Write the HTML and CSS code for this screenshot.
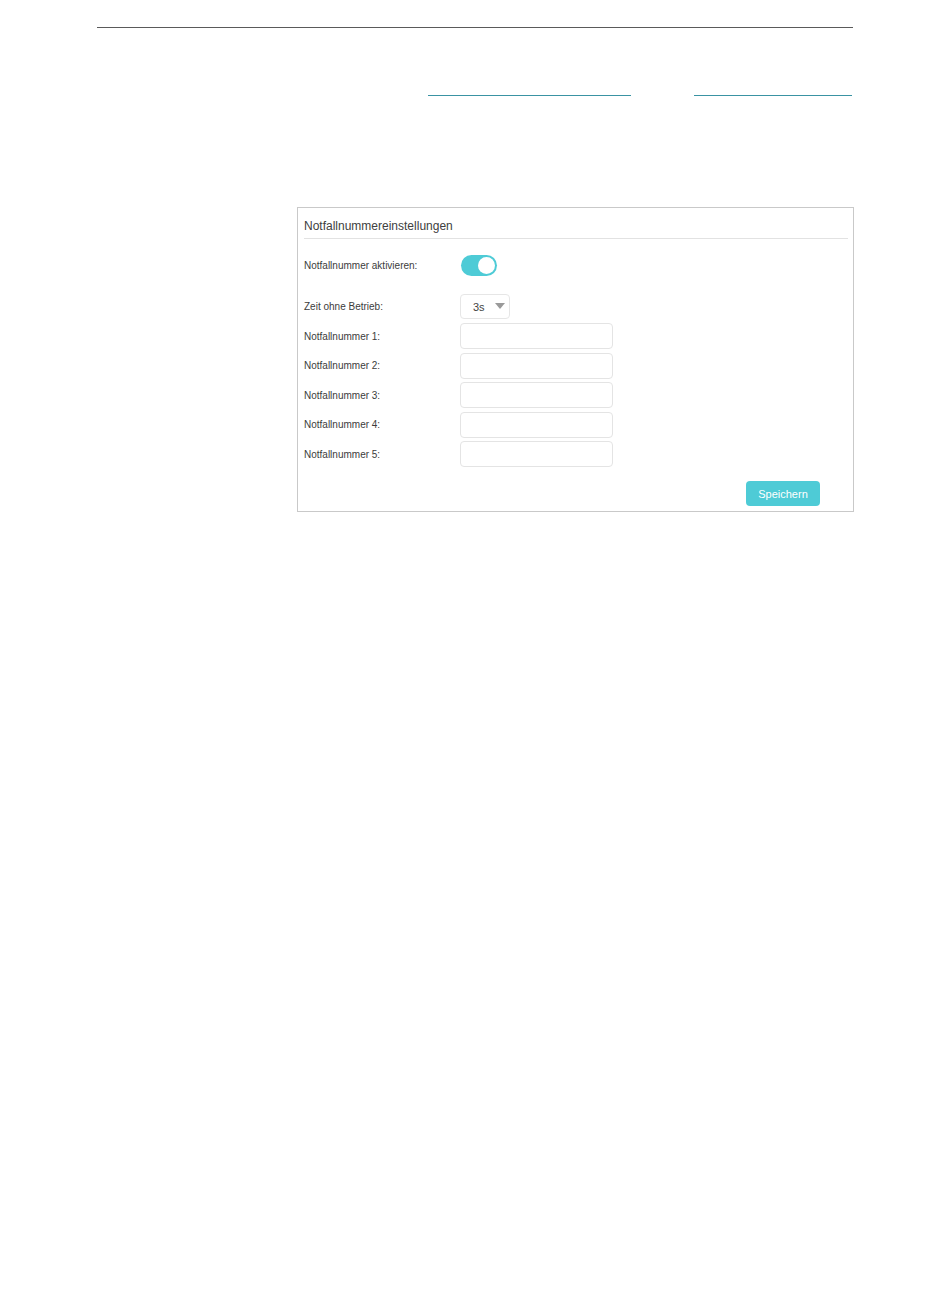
FILE: index.html
```html
<!DOCTYPE html>
<html lang="de">
<head>
    <meta charset="UTF-8">
    <meta name="viewport" content="width=device-width, initial-scale=1.0">
    <title>Notfallnummereinstellungen</title>
    <link rel="stylesheet" href="styles.css">
</head>
<body>
    <div class="page">
        <hr class="top-rule">
        <div class="links">
            <span class="link-line wide"></span>
            <span class="link-line narrow"></span>
        </div>

        <div class="panel">
            <h2 class="panel-title">Notfallnummereinstellungen</h2>
            <div class="form">
                <div class="row toggle-row">
                    <label>Notfallnummer aktivieren:</label>
                    <span class="toggle"><span class="knob"></span></span>
                </div>
                <div class="row select-row">
                    <label>Zeit ohne Betrieb:</label>
                    <div class="select">
                        <span>3s</span>
                        <span class="caret"></span>
                    </div>
                </div>
                <div class="row">
                    <label>Notfallnummer 1:</label>
                    <input type="text">
                </div>
                <div class="row">
                    <label>Notfallnummer 2:</label>
                    <input type="text">
                </div>
                <div class="row">
                    <label>Notfallnummer 3:</label>
                    <input type="text">
                </div>
                <div class="row">
                    <label>Notfallnummer 4:</label>
                    <input type="text">
                </div>
                <div class="row">
                    <label>Notfallnummer 5:</label>
                    <input type="text">
                </div>
            </div>
            <div class="actions">
                <button>Speichern</button>
            </div>
        </div>
    </div>
</body>
</html>
```

FILE: styles.css
```css
body {
    margin: 0;
    background: #ffffff;
    font-family: "Liberation Sans", Arial, sans-serif;
    color: #3c3c3c;
}

.page {
    width: 950px;
    height: 1290px;
}

.top-rule {
    margin: 27px 97px 0 97px;
    border: none;
    border-top: 1px solid #5a5a5a;
    height: 0;
}

.links {
    display: flex;
    margin-top: 67px;
    padding-left: 428px;
    gap: 63px;
}

.link-line {
    display: block;
    height: 1px;
    background: #3a93a3;
}

.link-line.wide {
    width: 203px;
}

.link-line.narrow {
    width: 158px;
}

.panel {
    margin: 111px 0 0 297px;
    width: 555px;
    border: 1px solid #c9c9c9;
    box-sizing: content-box;
}

.panel-title {
    margin: 0 5px 0 6px;
    padding: 11px 0 5px 0;
    font-size: 12px;
    font-weight: normal;
    color: #404040;
    border-bottom: 1px solid #e2e2e2;
}

.form {
    padding: 15px 0 0 6px;
    display: flex;
    flex-direction: column;
    gap: 3.5px;
}

.row {
    display: grid;
    grid-template-columns: 156px auto;
    align-items: center;
    height: 26px;
}

.row label {
    font-size: 10px;
    color: #3c3c3c;
}

.toggle-row {
    height: 22px;
    margin-bottom: 14px;
}

.toggle {
    position: relative;
    display: block;
    width: 36px;
    height: 21px;
    margin-left: 1px;
    border-radius: 11px;
    background: #4ecbd6;
}

.knob {
    position: absolute;
    top: 2px;
    right: 2px;
    width: 17px;
    height: 17px;
    border-radius: 50%;
    background: #ffffff;
}

.select-row {
    height: 25px;
    margin-bottom: 1px;
}

.select {
    display: flex;
    align-items: center;
    justify-content: space-between;
    width: 50px;
    height: 25px;
    padding: 2px 4px 0 12px;
    box-sizing: border-box;
    border: 1px solid #e6e6e6;
    border-radius: 4px;
    font-size: 11px;
    color: #444;
}

.caret {
    width: 0;
    height: 0;
    margin-top: -3px;
    border-left: 5px solid transparent;
    border-right: 5px solid transparent;
    border-top: 6px solid #9a9a9a;
}

.row input {
    width: 153px;
    height: 26px;
    margin: 0;
    padding: 0 6px;
    box-sizing: border-box;
    border: 1px solid #e4e4e4;
    border-radius: 4px;
    outline: none;
}

.actions {
    display: flex;
    justify-content: flex-end;
    padding: 14px 33px 5px 0;
}

button {
    width: 74px;
    height: 25px;
    border: none;
    border-radius: 4px;
    background: #4ecbd6;
    color: #ffffff;
    font-family: "Liberation Sans", Arial, sans-serif;
    font-size: 11px;
    padding: 0;
}
```
